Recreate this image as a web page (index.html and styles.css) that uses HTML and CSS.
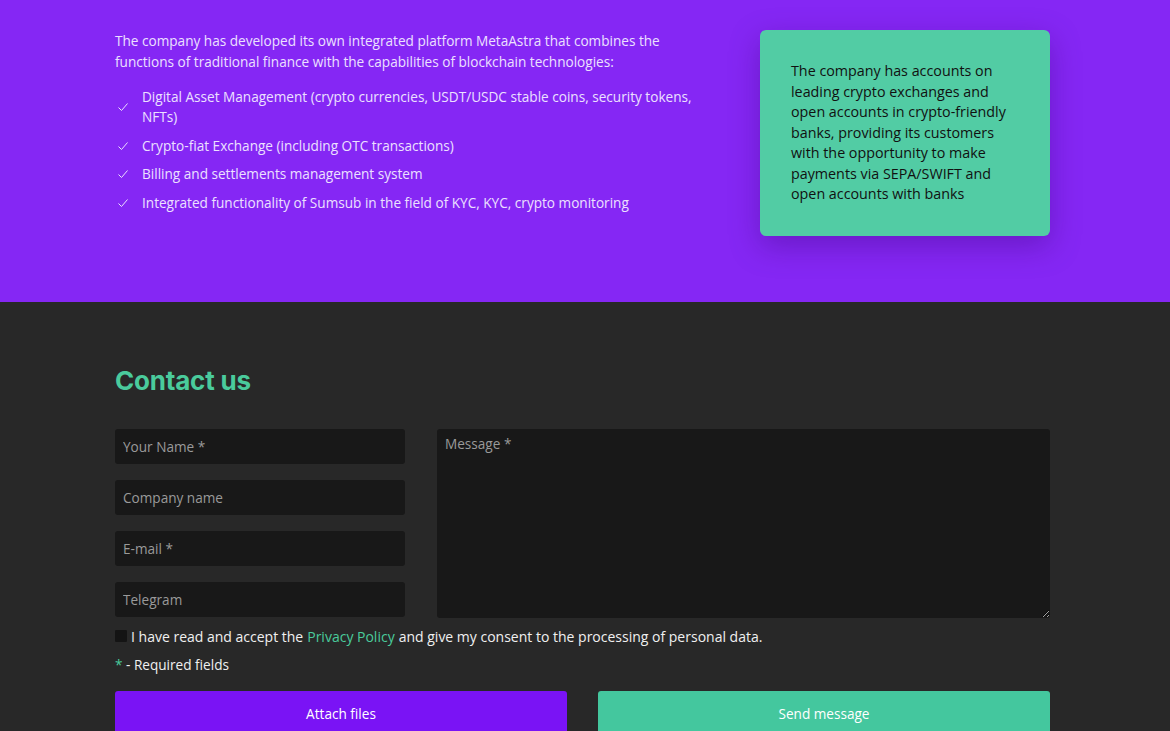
FILE: index.html
```html
<!DOCTYPE html>
<html>

<head>
    <meta charset="utf-8">
    <meta name="viewport" content="width=device-width, initial-scale=1.0">
    <title>MetaAstra - Contact</title>
    <link rel="stylesheet" href="styles.css">
</head>

<body>
    <section class="platform">
        <div class="container platform-inner">
            <div class="platform-text">
                <p class="lead">The company has developed its own integrated platform MetaAstra that combines the functions of traditional finance with the capabilities of blockchain technologies:</p>
                <ul class="checklist">
                    <li>
                        <svg class="check" viewBox="0 0 12 12"><path d="M1.5 6.5 L4.5 9.5 L10.5 2.5" /></svg>
                        <span>Digital Asset Management (crypto currencies, USDT/USDC stable coins, security tokens, NFTs)</span>
                    </li>
                    <li>
                        <svg class="check" viewBox="0 0 12 12"><path d="M1.5 6.5 L4.5 9.5 L10.5 2.5" /></svg>
                        <span>Crypto-fiat Exchange (including OTC transactions)</span>
                    </li>
                    <li>
                        <svg class="check" viewBox="0 0 12 12"><path d="M1.5 6.5 L4.5 9.5 L10.5 2.5" /></svg>
                        <span>Billing and settlements management system</span>
                    </li>
                    <li>
                        <svg class="check" viewBox="0 0 12 12"><path d="M1.5 6.5 L4.5 9.5 L10.5 2.5" /></svg>
                        <span>Integrated functionality of Sumsub in the field of KYC, KYC, crypto monitoring</span>
                    </li>
                </ul>
            </div>
            <div class="card">
                <p>The company has accounts on leading crypto exchanges and open accounts in crypto-friendly banks, providing its customers with the opportunity to make payments via SEPA/SWIFT and open accounts with banks</p>
            </div>
        </div>
    </section>

    <section class="contact">
        <div class="container">
            <h2>Contact us</h2>
            <form class="contact-form">
                <div class="fields">
                    <div class="inputs">
                        <input type="text" placeholder="Your Name *">
                        <input type="text" placeholder="Company name">
                        <input type="email" placeholder="E-mail *">
                        <input type="text" placeholder="Telegram">
                    </div>
                    <textarea placeholder="Message *"></textarea>
                </div>
                <label class="consent">
                    <span class="box"></span>
                    I have read and accept the <a href="#">Privacy Policy</a> and give my consent to the processing of personal data.
                </label>
                <p class="required"><span>*</span> - Required fields</p>
                <div class="actions">
                    <button type="button" class="btn btn-attach">Attach files</button>
                    <button type="submit" class="btn btn-send">Send message</button>
                </div>
            </form>
        </div>
    </section>
</body>
</html>
```

FILE: styles.css
```css
body {
    margin: 0;
    font-family: "Open Sans", "DejaVu Sans", sans-serif;
    font-size: 13.6px;
    color: #fff;
    background-color: #282828;
}

.container {
    width: 935px;
    margin: 0 120px 0 115px;
}

/* purple platform block */
.platform {
    background-color: #8527f4;
    padding: 30px 0 66px;
}

.platform-inner {
    display: flex;
    justify-content: space-between;
    align-items: flex-start;
}

.platform-text {
    width: 605px;
    color: #ece0ff;
}

.lead {
    margin: 0 0 15px;
    line-height: 21px;
}

.checklist {
    list-style: none;
    margin: 0;
    padding: 0;
}

.checklist li {
    display: flex;
    align-items: center;
    line-height: 20px;
    margin-bottom: 8.5px;
}

.check {
    flex: none;
    width: 12px;
    height: 12px;
    margin: 0 13px 0 2px;
    fill: none;
    stroke: #ece0ff;
    stroke-width: 1;
}

.card {
    width: 290px;
    box-sizing: border-box;
    padding: 31px 31px 31px 31px;
    background-color: #52cca4;
    border-radius: 6px;
    box-shadow: 0 10px 30px rgba(70, 10, 140, 0.45);
    color: #111;
}

.card p {
    margin: 0;
    font-size: 14.3px;
    line-height: 20.5px;
}

/* contact form */
.contact {
    padding: 64px 0 40px;
}

.contact h2 {
    margin: 0 0 33px;
    font-family: Inter, "Open Sans", sans-serif;
    font-weight: 700;
    font-size: 26px;
    line-height: 30px;
    color: #4acb9c;
    letter-spacing: -0.2px;
}

.fields {
    display: flex;
    gap: 32px;
}

.inputs {
    display: flex;
    flex-direction: column;
    gap: 16px;
    width: 290px;
    flex: none;
}

input,
textarea {
    font-family: inherit;
    font-size: 13.6px;
    color: #fff;
    background-color: #181818;
    border: none;
    border-radius: 3px;
    box-sizing: border-box;
    outline: none;
}

input {
    height: 35px;
    padding: 0 8px;
}

textarea {
    flex: 1;
    height: 189px;
    padding: 5px 8px;
}

input::placeholder,
textarea::placeholder {
    color: #9a9a9a;
}

.consent {
    display: flex;
    align-items: center;
    margin-top: 10px;
    font-size: 14px;
    line-height: 17px;
    color: #f0f0f0;
}

.consent .box {
    width: 12px;
    height: 12px;
    margin-right: 4px;
    background-color: #141414;
    border-radius: 1px;
}

.consent a {
    color: #4acb9c;
    text-decoration: none;
    margin: 0 4px;
}

.required {
    margin: 11px 0 18px;
    line-height: 17px;
    color: #f0f0f0;
}

.required span {
    color: #4acb9c;
}

.actions {
    display: flex;
    gap: 31px;
}

.btn {
    flex: 1;
    height: 46px;
    border: none;
    border-radius: 3px;
    font-family: inherit;
    font-size: 13.6px;
    color: #fff;
    cursor: pointer;
}

.btn-attach {
    background-color: #7a13f5;
}

.btn-send {
    background-color: #44c79e;
}
```
